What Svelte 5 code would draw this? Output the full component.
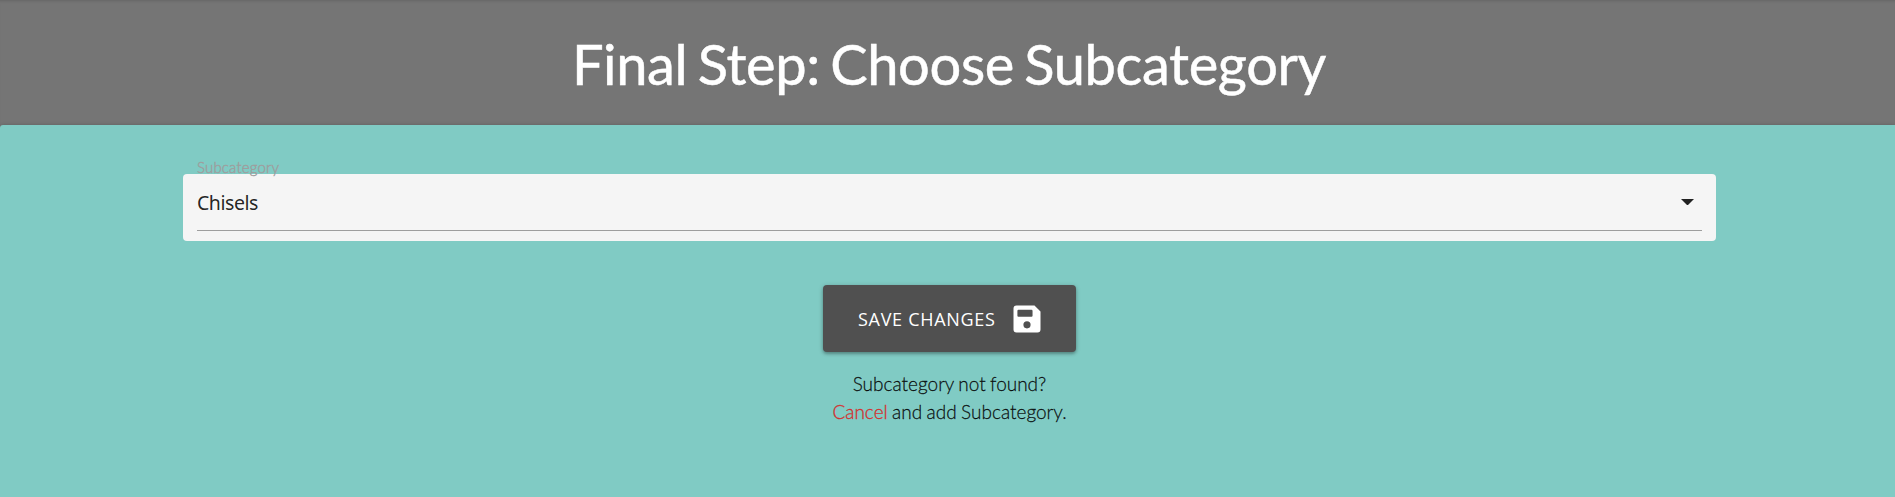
<script>
  let selected = $state('Chisels');
</script>

<div class="page">
  <header><h1>Final Step: Choose Subcategory</h1></header>
  <main>
    <div class="field">
      <span class="label">Subcategory</span>
      <div class="select">
        <span class="value">{selected}</span>
        <svg class="caret" viewBox="7 10 10 5"><path d="M7 10l5 5 5-5z" fill="#212121" /></svg>
      </div>
    </div>
    <button>
      <span class="caption">SAVE CHANGES</span>
      <svg class="save" viewBox="0 0 24 24"><path fill="#fff" fill-rule="evenodd" d="M17 3H5a2 2 0 0 0-2 2v14a2 2 0 0 0 2 2h14a2 2 0 0 0 2-2V7zM14.400 15.900a2.400 2.400 0 1 1-4.800 0 2.400 2.400 0 0 1 4.800 0zM6.300 5.900h8.700q.7 0 .7.7v3.200q0 .7-.7.7H6.300q-.7 0-.7-.7V6.600q0-.7.7-.7z" /></svg>
    </button>
    <p>Subcategory not found?<br /><a href="#cancel">Cancel</a> and add Subcategory.</p>
  </main>
</div>

<style>
  :global(body) { margin: 0; background: #757575; overflow: hidden; }
  .page { height: 497px; display: flex; flex-direction: column; font-family: Lato, sans-serif; color: rgba(0, 0, 0, 0.87); }
  header { height: 125px; display: flex; justify-content: center; background: #757575; box-shadow: inset 0 3px 3px -2px rgba(0, 0, 0, 0.14); }
  h1 { margin: 29px 0 0 3px; font-size: 56px; line-height: 70px; font-weight: 400; letter-spacing: -0.36px; word-spacing: -3.700px; -webkit-text-stroke: 0.5px #fff; color: #fff; white-space: nowrap; }
  main { flex: 1; display: flex; flex-direction: column; align-items: center; background: #80cbc4; border-radius: 3px 0 0 0; box-shadow: 0 1px 4px rgba(0, 0, 0, 0.3); padding-left: 4px; }
  .field { position: relative; box-sizing: border-box; width: 1533px; height: 67px; margin-top: 49px; padding: 0 14px; background: #f5f5f5; border-radius: 4px; }
  .label { position: absolute; left: 14px; top: -17px; font-size: 15px; line-height: 20px; font-weight: 300; letter-spacing: 0.16px; -webkit-text-stroke: 0.4px #9e9e9e; color: #9e9e9e; }
  .select { display: flex; align-items: center; justify-content: space-between; height: 56px; border-bottom: 1px solid #9e9e9e; padding-right: 8px; }
  .value { padding-top: 1px; font: 400 19.500px/30px "Noto Sans", sans-serif; letter-spacing: -0.45px; color: rgba(0, 0, 0, 0.87); }
  .caret { width: 13px; height: 6.500px; }
  button { box-sizing: border-box; width: 253px; height: 67px; margin-top: 44px; padding: 0 31px 0 35px; border: 0; border-radius: 4px; background: #505050; color: #fff; display: flex; align-items: center; justify-content: space-between; box-shadow: 0 2px 3px rgba(0, 0, 0, 0.22), 0 1px 5px rgba(0, 0, 0, 0.2); }
  .caption { font: 400 18px/30px "Open Sans", sans-serif; letter-spacing: 0.7px; white-space: nowrap; }
  .save { width: 36px; height: 36px; }
  p { margin: 18px 0 0; font-size: 19px; line-height: 28px; text-align: center; font-weight: 300; word-spacing: -0.8px; -webkit-text-stroke: 0.3px currentColor; }
  a { color: #d32f2f; text-decoration: none; }
</style>
